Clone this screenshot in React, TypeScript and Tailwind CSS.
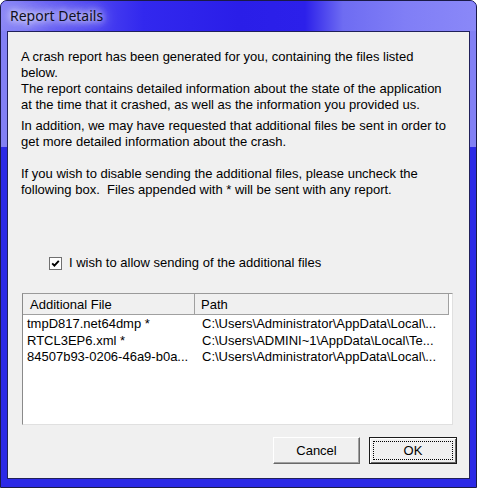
import React from "react";

const files = [
  { name: "tmpD817.net64dmp *", path: "C:\\Users\\Administrator\\AppData\\Local\\..." },
  { name: "RTCL3EP6.xml *", path: "C:\\Users\\ADMINI~1\\AppData\\Local\\Te..." },
  { name: "84507b93-0206-46a9-b0a...", path: "C:\\Users\\Administrator\\AppData\\Local\\..." },
];

export default function App() {
  return (
    <div className="w-[477px] h-[488px] flex flex-col rounded-t-[7px] border border-[#1a1a48] bg-[#2b29e6] bg-linear-to-b from-[#8280f4] from-30% to-[#2b29e6] to-30% overflow-hidden font-[Liberation_Sans,Arial,sans-serif]">
      <div className="h-[30px] shrink-0 flex items-center pl-[9px] bg-[#3a30ee] bg-[image:linear-gradient(90deg,#8a86f6_0%,#5a52f2_14%,#3228ee_30%,#2a1ee8_50%,#2c20ea_64%,#6e6cf2_72%,#807ef6_85%,#8a88f8_100%)]">
        <span className="font-[Noto_Sans,sans-serif] text-[14px] leading-[18px] text-[#101020] [text-shadow:0_0_6px_#fff,0_0_12px_#eeeeff,0_0_18px_#dcdcff]">
          Report Details
        </span>
      </div>
      <div className="flex-1 mx-[6px] mb-[8px] border border-[#20205a] bg-[#f0f0f0] flex flex-col text-[13px] leading-[16px] text-black">
        <div className="pl-[13px] pt-[17px] whitespace-nowrap">
          <p>
            A crash report has been generated for you, containing the files listed
            <br />
            below.
            <br />
            The report contains detailed information about the state of the application
            <br />
            at the time that it crashed, as well as the information you provided us.
          </p>
          <p className="mt-[5px]">
            In addition, we may have requested that additional files be sent in order to
            <br />
            get more detailed information about the crash.
          </p>
          <p className="mt-[16px]">
            If you wish to disable sending the additional files, please uncheck the
            <br />
            following box.&nbsp; Files appended with * will be sent with any report.
          </p>
        </div>

        <div className="mt-[57px] ml-[41px] flex items-center gap-[7px] h-[16px]">
          <div className="w-[13px] h-[13px] border border-[#707070] bg-white flex items-center justify-center">
            <svg width="9" height="9" viewBox="0 0 9 9">
              <path d="M1.2 4.3 L3.4 6.6 L7.8 1.8" fill="none" stroke="#000" strokeWidth="1.9" />
            </svg>
          </div>
          <span>I wish to allow sending of the additional files</span>
        </div>

        <div className="mt-[22px] ml-[14px] w-[431px] h-[132px] border border-t-[#9a9a9a] border-l-[#8a8a8a] border-r-[#e0e0e0] border-b-[#e0e0e0] bg-white flex flex-col">
          <div className="h-[21px] flex bg-[#f0f0f0] border-b border-[#a0a0a0] w-[426px]">
            <div className="w-[172px] pl-[7px] pt-[3px] border-r border-[#a0a0a0]">Additional File</div>
            <div className="w-[254px] pl-[6px] pt-[3px] border-r border-[#a0a0a0]">Path</div>
          </div>
          <div className="pt-[1px]">
            {files.map((f) => (
              <div key={f.name} className="grid grid-cols-[172px_1fr] h-[16.5px] whitespace-nowrap">
                <div className="pl-[4px]">{f.name}</div>
                <div className="pl-[7px]">{f.path}</div>
              </div>
            ))}
          </div>
        </div>

        <div className="mt-[12px] flex justify-end gap-[9px] pr-[12px]">
          <button className="w-[87px] h-[27px] bg-[#f0f0f0] border border-t-white border-l-white border-r-[#696969] border-b-[#696969] shadow-[inset_-1px_-1px_0_#a0a0a0] text-[13px] text-black">
            Cancel
          </button>
          <button className="relative w-[88px] h-[27px] bg-[#f0f0f0] border border-[#1a1a1a] shadow-[inset_1px_1px_0_#fff,inset_-1px_-1px_0_#696969] text-[13px] text-black">
            <span className="absolute inset-[3px] border border-dotted border-black"></span>
            OK
          </button>
        </div>
      </div>
    </div>
  );
}
